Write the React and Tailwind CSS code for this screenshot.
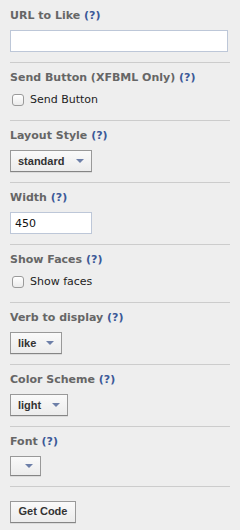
import React from "react"

const labelFont = { fontFamily: '"DejaVu Sans", Verdana, sans-serif' }

function Label({ children }) {
  return (
    <div className="h-[14px] leading-[14px] text-[11px] font-bold text-[#666] whitespace-nowrap">
      {children} <span className="text-[#3b5998]">(?)</span>
    </div>
  )
}

function Arrow() {
  return (
    <svg width="8" height="4" viewBox="0 0 8 4" className="shrink-0 ml-auto">
      <polygon points="0,0 8,0 4,4" fill="#6d7fa8" />
    </svg>
  )
}

function SelectBox({ value, width, height = "h-[22px]" }) {
  return (
    <div
      className={`${width} ${height} flex items-center pl-[7px] pr-[7px] border border-[#999] border-b-[#858585] bg-gradient-to-b from-[#fafafa] to-[#ececec] shadow-[0_1px_0_rgba(0,0,0,0.08)] text-[11px] font-bold text-[#333] leading-none`}
      style={{ fontFamily: '"Liberation Sans", Arial, sans-serif' }}
    >
      {value && <span>{value}</span>}
      <Arrow />
    </div>
  )
}

function Checkbox({ text }) {
  return (
    <div className="h-[18px] flex items-center gap-[6px] pl-[2px]">
      <div className="w-[12px] h-[12px] rounded-[3px] border border-[#9a9a9a] bg-gradient-to-b from-white to-[#ebebeb] shadow-[inset_0_1px_0_#fff]"></div>
      <span className="text-[11px] leading-[18px] text-[#222]">{text}</span>
    </div>
  )
}

function Section({ children, first, last, gap = "gap-[7px]", pb = "pb-[10px]" }) {
  return (
    <div
      className={`flex flex-col ${gap} ${first ? "pt-0" : "pt-[8px]"} ${
        last ? "" : `${pb} border-b border-[#cccccc]`
      }`}
    >
      {children}
    </div>
  )
}

export default function App() {
  return (
    <div className="w-[240px] min-h-[530px] bg-[#eeeeee] px-[10px] pt-[9px]" style={labelFont}>
      <Section first>
        <Label>URL to Like</Label>
        <input
          type="text"
          readOnly
          className="w-[218px] h-[22px] border border-[#bdc7d8] bg-white px-[4px] text-[11px] outline-none"
        />
      </Section>

      <Section gap="gap-[6px]" pb="pb-[11px]">
        <Label>Send Button (XFBML Only)</Label>
        <Checkbox text="Send Button" />
      </Section>

      <Section>
        <Label>Layout Style</Label>
        <SelectBox value="standard" width="w-[82px]" />
      </Section>

      <Section>
        <Label>Width</Label>
        <input
          type="text"
          readOnly
          value="450"
          className="w-[82px] h-[22px] border border-[#bdc7d8] bg-white px-[4px] text-[11px] text-[#111] outline-none"
        />
      </Section>

      <Section gap="gap-[6px]" pb="pb-[11px]">
        <Label>Show Faces</Label>
        <Checkbox text="Show faces" />
      </Section>

      <Section>
        <Label>Verb to display</Label>
        <SelectBox value="like" width="w-[52px]" />
      </Section>

      <Section>
        <Label>Color Scheme</Label>
        <SelectBox value="light" width="w-[58px]" />
      </Section>

      <Section>
        <Label>Font</Label>
        <SelectBox value="" width="w-[31px]" height="h-[20px]" />
      </Section>

      <div className="pt-[11px]">
        <button
          className="w-[66px] h-[22px] border border-[#999] border-b-[#858585] bg-gradient-to-b from-[#fafafa] to-[#ececec] shadow-[0_1px_0_rgba(0,0,0,0.08)] text-[11px] font-bold text-[#333] leading-none"
          style={{ fontFamily: '"Liberation Sans", Arial, sans-serif' }}
        >
          Get Code
        </button>
      </div>
    </div>
  )
}
